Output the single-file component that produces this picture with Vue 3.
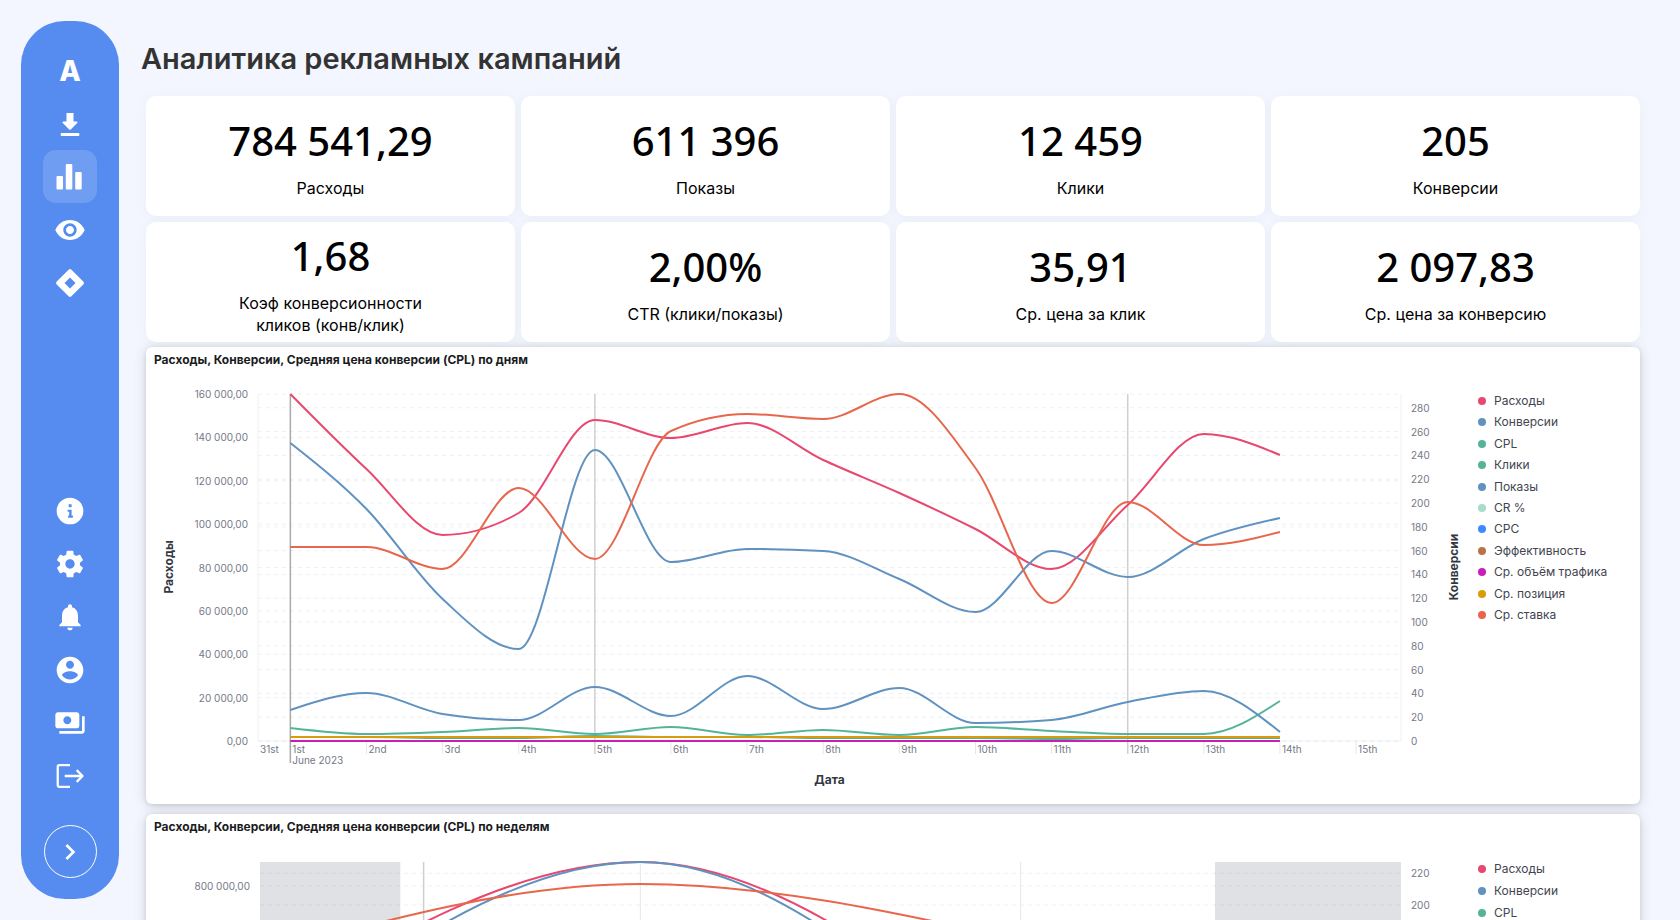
<script setup>
import { ref, computed, onMounted, onBeforeUnmount } from 'vue'

const kpis = [
  { value: '784 541,29', label: 'Расходы' },
  { value: '611 396', label: 'Показы' },
  { value: '12 459', label: 'Клики' },
  { value: '205', label: 'Конверсии' },
  { value: '1,68', label: 'Коэф конверсионности кликов (конв/клик)' },
  { value: '2,00%', label: 'CTR (клики/показы)' },
  { value: '35,91', label: 'Ср. цена за клик' },
  { value: '2 097,83', label: 'Ср. цена за конверсию' },
]

const red = '#e8486f'
const blue = '#6092c0'
const green = '#54b399'
const orange = '#e7664c'

const legend = [
  { name: 'Расходы', color: red },
  { name: 'Конверсии', color: blue },
  { name: 'CPL', color: green },
  { name: 'Клики', color: green },
  { name: 'Показы', color: blue },
  { name: 'CR %', color: '#a8dbc9' },
  { name: 'CPC', color: '#3c8cff' },
  { name: 'Эффективность', color: '#b9734a' },
  { name: 'Ср. объём трафика', color: '#ca1eb8' },
  { name: 'Ср. позиция', color: '#da9b0b' },
  { name: 'Ср. ставка', color: orange },
]

// Heights above the baseline, for a plot 347 units tall, one entry per day
const daily = [
  { color: red, h: [347, 272, 206, 228, 321, 303, 318, 281, 248, 212, 172, 236, 307, 286] },
  { color: blue, h: [298, 232, 142, 92, 291, 179, 192, 190, 162, 129, 190, 164, 202, 223] },
  { color: green, h: [13, 7, 9, 13, 7, 14, 6, 11, 6, 14, 10, 7, 7, 40] },
  { color: green, h: [4, 4, 3, 3, 5, 4, 4, 3, 3, 3, 2, 3, 3, 3] },
  { color: blue, h: [31, 48, 27, 21, 54, 25, 65, 32, 53, 18, 21, 39, 50, 9] },
  { color: '#ca1eb8', h: Array(14).fill(0) },
  { color: '#da9b0b', h: Array(14).fill(4) },
  { color: orange, h: [194, 194, 172, 253, 182, 310, 327, 322, 347, 273, 138, 239, 196, 209] },
]

// Plot 360 units tall, one entry per week
const weekly = [
  { color: red, h: [206, 360, 165] },
  { color: blue, h: [174, 360, 133] },
  { color: orange, h: [267, 338, 282] },
]

const body = ref(null)
const width = ref(1332)
let observer
onMounted(() => {
  const measure = () => { width.value = body.value.clientWidth }
  measure()
  observer = new ResizeObserver(measure)
  observer.observe(body.value)
})
onBeforeUnmount(() => observer && observer.disconnect())

// Monotone cubic interpolation in x
function curve(pts) {
  const n = pts.length
  const s = []
  for (let i = 0; i < n - 1; i++) s.push((pts[i + 1][1] - pts[i][1]) / (pts[i + 1][0] - pts[i][0]))
  const m = Array(n).fill(0)
  for (let i = 1; i < n - 1; i++) {
    const a = s[i - 1]
    const b = s[i]
    m[i] = (Math.sign(a) + Math.sign(b)) * Math.min(Math.abs(a), Math.abs(b), 0.25 * Math.abs(a + b))
  }
  m[0] = (3 * s[0] - m[1]) / 2
  m[n - 1] = (3 * s[n - 2] - m[n - 2]) / 2
  let d = `M${pts[0][0]} ${pts[0][1]}`
  for (let i = 0; i < n - 1; i++) {
    const [x0, y0] = pts[i]
    const [x1, y1] = pts[i + 1]
    const k = (x1 - x0) / 3
    d += `C${x0 + k} ${y0 + m[i] * k} ${x1 - k} ${y1 - m[i + 1] * k} ${x1} ${y1}`
  }
  return d
}

const money = (v) => String(v).replace(/\B(?=(\d{3})+$)/g, ' ') + ',00'

const day = computed(() => {
  const left = 112
  const right = width.value - 77
  const top = 23
  const bottom = 370
  const w = right - left
  const first = left + w * 0.0283
  const step = w * 0.0666
  const names = ['1st', '2nd', '3rd', '4th', '5th', '6th', '7th', '8th', '9th', '10th', '11th', '12th', '13th', '14th', '15th']
  return {
    left, right, top, bottom, first,
    mid: (left + right) / 2,
    yLeft: Array.from({ length: 9 }, (_, i) => ({ y: bottom - (347 / 8) * i, text: money(i * 20000) })),
    yRight: Array.from({ length: 15 }, (_, i) => ({ y: bottom - 23.8 * i, text: i * 20 })),
    ticks: names.map((text, i) => ({ text, x: first + step * i, week: i === 4 || i === 11 })),
    lines: daily.map((l) => ({ color: l.color, d: curve(l.h.map((h, i) => [first + step * i, bottom - h])) })),
  }
})

const week = computed(() => {
  const left = 114
  const right = width.value - 77
  const top = 24
  const bottom = 384
  const w = right - left
  const step = w / 3
  return {
    left, right, top, bottom,
    month: left + w * 0.1434,
    yLeft: Array.from({ length: 9 }, (_, i) => ({ y: bottom - 42 * i, text: money(i * 100000) })),
    yRight: Array.from({ length: 12 }, (_, i) => ({ y: bottom - 31.7 * i, text: i * 20 })),
    marks: [left + step, left + step * 2],
    bands: [
      { x: left, w: w * 0.123 },
      { x: left + w * 0.837, w: w * 0.163 },
    ],
    lines: weekly.map((l) => ({ color: l.color, d: curve(l.h.map((h, i) => [left + step * i, bottom - h])) })),
  }
})
</script>

<template>
  <div class="app">
    <nav class="sidebar" aria-label="Главное меню">
      <a class="item logo" href="#">A</a>
      <button class="item" type="button" aria-label="Загрузка">
        <svg viewBox="0 0 32 32"><path d="M12.5 5h7v8.5h3.1c.9 0 1.2.9.6 1.5l-6.4 6.4a1.1 1.1 0 0 1-1.6 0L8.800 15c-.6-.6-.3-1.500.6-1.500h3.100z" /><rect x="6.700" y="25" width="18.700" height="3" rx="1" /></svg>
      </button>
      <button class="item active" type="button" aria-label="Аналитика">
        <svg viewBox="0 0 32 32"><rect x="2.500" y="15" width="6.500" height="13.500" rx="1" /><rect x="11.800" y="3" width="6.500" height="25.500" rx="1" /><rect x="21.200" y="11" width="6.500" height="17.500" rx="1" /></svg>
      </button>
      <button class="item" type="button" aria-label="Просмотр">
        <svg viewBox="0 0 24 24"><path d="M12 4.500C7 4.500 2.730 7.610 1 12c1.730 4.390 6 7.500 11 7.500s9.270-3.110 11-7.500c-1.730-4.390-6-7.500-11-7.500zM12 17c-2.760 0-5-2.240-5-5s2.240-5 5-5 5 2.240 5 5-2.240 5-5 5zm0-8c-1.660 0-3 1.340-3 3s1.340 3 3 3 3-1.340 3-3-1.340-3-3-3z" /></svg>
      </button>
      <button class="item" type="button" aria-label="Объекты">
        <svg viewBox="0 0 32 32"><path fill-rule="evenodd" d="M14.600 2.700a2 2 0 0 1 2.800 0l11.900 11.900a2 2 0 0 1 0 2.800L17.400 29.300a2 2 0 0 1-2.800 0L2.700 17.400a2 2 0 0 1 0-2.800zM16 10.500 10.500 16l5.500 5.500 5.500-5.500z" /></svg>
      </button>

      <span class="spacer"></span>

      <button class="item" type="button" aria-label="Информация">
        <svg viewBox="0 0 24 24"><path fill-rule="evenodd" d="M12 2a10 10 0 1 0 0 20 10 10 0 0 0 0-20zM11 7h2.200v2.200H11zM10.200 11h3v4.400h1V17h-3.600v-1.600h.8v-2.800h-1.200z" /></svg>
      </button>
      <button class="item" type="button" aria-label="Настройки">
        <svg viewBox="0 0 24 24"><path d="M19.430 12.980c.04-.32.07-.64.07-.98s-.03-.66-.07-.98l2.110-1.650c.19-.15.24-.42.12-.64l-2-3.460c-.12-.22-.39-.3-.61-.22l-2.490 1c-.52-.4-1.080-.73-1.690-.98l-.38-2.650C14.460 2.180 14.250 2 14 2h-4c-.25 0-.46.18-.49.42l-.38 2.650c-.61.25-1.170.59-1.690.98l-2.490-1c-.23-.09-.49 0-.61.22l-2 3.460c-.13.22-.07.49.12.64l2.110 1.650c-.04.32-.07.65-.07.98s.03.66.07.98l-2.110 1.650c-.19.15-.24.42-.12.64l2 3.460c.12.22.39.3.61.22l2.490-1c.52.4 1.080.73 1.690.98l.38 2.650c.03.24.24.42.49.42h4c.25 0 .46-.18.49-.42l.38-2.650c.61-.25 1.170-.59 1.690-.98l2.490 1c.23.09.49 0 .61-.22l2-3.460c.12-.22.07-.49-.12-.64l-2.110-1.650zM12 15.500c-1.930 0-3.500-1.570-3.500-3.500s1.570-3.500 3.500-3.500 3.500 1.570 3.500 3.500-1.570 3.500-3.500 3.500z" /></svg>
      </button>
      <button class="item" type="button" aria-label="Уведомления">
        <svg viewBox="0 0 24 24"><path d="M12 22c1.100 0 2-.9 2-2h-4c0 1.100.89 2 2 2zm6-6v-5c0-3.070-1.640-5.640-4.500-6.320V4c0-.83-.67-1.500-1.500-1.500s-1.500.67-1.500 1.500v.68C7.630 5.360 6 7.920 6 11v5l-2 2v1h16v-1l-2-2z" /></svg>
      </button>
      <button class="item" type="button" aria-label="Профиль">
        <svg viewBox="0 0 24 24"><path d="M12 2C6.480 2 2 6.480 2 12s4.480 10 10 10 10-4.480 10-10S17.520 2 12 2zm0 3c1.660 0 3 1.340 3 3s-1.340 3-3 3-3-1.340-3-3 1.340-3 3-3zm0 14.200c-2.500 0-4.710-1.280-6-3.220.03-1.990 4-3.080 6-3.080 1.990 0 5.970 1.090 6 3.080-1.290 1.940-3.500 3.220-6 3.220z" /></svg>
      </button>
      <button class="item" type="button" aria-label="Платежи">
        <svg viewBox="0 0 24 24"><path d="M19 14V6c0-1.100-.9-2-2-2H3c-1.100 0-2 .9-2 2v8c0 1.100.9 2 2 2h14c1.100 0 2-.9 2-2zm-9-1c-1.660 0-3-1.340-3-3s1.340-3 3-3 3 1.340 3 3-1.340 3-3 3zm13-6v11c0 1.100-.9 2-2 2H4v-2h17V7h2z" /></svg>
      </button>
      <button class="item" type="button" aria-label="Выход">
        <svg class="stroked" viewBox="0 0 24 24"><path d="M12 3.800H4a1.200 1.200 0 0 0-1.200 1.200v14A1.200 1.200 0 0 0 4 20.200h8M8 12h13M17 7.600l4.400 4.400-4.400 4.400" /></svg>
      </button>
      <button class="item expand" type="button" aria-label="Развернуть">
        <svg viewBox="0 0 24 24"><path d="M10 6 8.590 7.410 13.170 12l-4.580 4.590L10 18l6-6z" /></svg>
      </button>
    </nav>

    <main class="main">
      <h1>Аналитика рекламных кампаний</h1>
      <div class="content">
        <section class="kpis">
          <article v-for="k in kpis" :key="k.label" class="kpi">
            <strong>{{ k.value }}</strong>
            <span>{{ k.label }}</span>
          </article>
        </section>

        <section class="panel">
          <h2>Расходы, Конверсии, Средняя цена конверсии (CPL) по дням</h2>
          <div class="chart">
            <div ref="body" class="plot">
              <svg :width="width" height="433">
                <g class="grid">
                  <path v-for="t in day.yLeft" :key="t.text" :d="`M${day.left} ${t.y}H${day.right}`" />
                  <path v-for="t in day.yRight" :key="t.text" :d="`M${day.left} ${t.y}H${day.right}`" />
                </g>
                <path class="frame" :d="`M${day.left} ${day.top}V${day.bottom}H${day.right}V${day.top}`" />
                <template v-for="t in day.ticks" :key="t.text">
                  <path :class="t.week ? 'week' : 'tick'" :d="`M${t.x} ${t.week ? day.top : day.bottom}V383`" />
                  <text class="label" :x="t.x + 2" y="382">{{ t.text }}</text>
                </template>
                <path class="month" :d="`M${day.first} ${day.top}V392`" />
                <text class="label" :x="day.left + 2" y="382">31st</text>
                <text class="label" :x="day.first + 2" y="393">June 2023</text>
                <path v-for="(l, i) in day.lines" :key="i" class="line" :stroke="l.color" :d="l.d" />
                <text v-for="t in day.yLeft" :key="t.text" class="label end" :x="day.left - 10" :y="t.y + 4">{{ t.text }}</text>
                <text v-for="t in day.yRight" :key="t.text" class="label" :x="day.right + 10" :y="t.y + 4">{{ t.text }}</text>
                <text class="axis" transform="translate(27 196) rotate(-90)">Расходы</text>
                <text class="axis" :transform="`translate(${day.right + 57} 196) rotate(-90)`">Конверсии</text>
                <text class="axis" :x="day.mid" y="413">Дата</text>
              </svg>
            </div>
            <ul class="legend">
              <li v-for="l in legend" :key="l.name"><i :style="{ background: l.color }"></i>{{ l.name }}</li>
            </ul>
          </div>
        </section>

        <section class="panel">
          <h2>Расходы, Конверсии, Средняя цена конверсии (CPL) по неделям</h2>
          <div class="chart">
            <div class="plot">
              <svg :width="width" height="433">
                <rect v-for="b in week.bands" :key="b.x" class="band" :x="b.x" :y="week.top" :width="b.w" height="360" />
                <g class="grid shaded">
                  <path v-for="t in week.yLeft" :key="t.text" :d="`M${week.left} ${t.y}H${week.right}`" />
                  <path v-for="t in week.yRight" :key="t.text" :d="`M${week.left} ${t.y}H${week.right}`" />
                </g>
                <path class="week" :d="`M${week.month} ${week.top}V${week.bottom}`" />
                <path v-for="x in week.marks" :key="x" class="tick" :d="`M${x} ${week.top}V${week.bottom}`" />
                <path v-for="(l, i) in week.lines" :key="i" class="line" :stroke="l.color" :d="l.d" />
                <text v-for="t in week.yLeft" :key="t.text" class="label end" :x="week.left - 10" :y="t.y + 4">{{ t.text }}</text>
                <text v-for="t in week.yRight" :key="t.text" class="label" :x="week.right + 10" :y="t.y + 4">{{ t.text }}</text>
              </svg>
            </div>
            <ul class="legend roomy">
              <li v-for="l in legend" :key="l.name"><i :style="{ background: l.color }"></i>{{ l.name }}</li>
            </ul>
          </div>
        </section>
      </div>
    </main>
  </div>
</template>

<style>
body {
  background: #f3f6fe;
}
</style>

<style scoped>
.app {
  display: flex;
  height: 100vh;
  overflow: hidden;
  box-sizing: border-box;
  padding-left: 21px;
  font-family: Inter, "Noto Sans", sans-serif;
  background: #f3f6fe;
}
.sidebar {
  flex: none;
  display: flex;
  flex-direction: column;
  align-items: center;
  width: 98px;
  margin: 21px 0;
  padding: 23px 0 21px;
  box-sizing: border-box;
  border-radius: 44px;
  background: #568cef;
}
.item {
  flex: none;
  display: flex;
  align-items: center;
  justify-content: center;
  width: 54px;
  height: 53px;
  padding: 0;
  border: 0;
  border-radius: 13px;
  background: none;
  color: #fff;
  cursor: pointer;
}
.item svg {
  width: 32px;
  height: 32px;
  fill: currentColor;
}
.item svg.stroked {
  fill: none;
  stroke: currentColor;
  stroke-width: 1.7;
  stroke-linejoin: round;
}
.logo {
  font-size: 28px;
  font-weight: 800;
  text-decoration: none;
}
.active {
  background: rgba(255, 255, 255, 0.15);
}
.spacer {
  flex: 1;
}
.expand {
  width: 53px;
  margin-top: 23px;
  border: 1px solid #fff;
  border-radius: 50%;
}
.main {
  flex: 1;
  min-width: 0;
  overflow-y: auto;
  scrollbar-width: none;
  padding: 39px 40px 40px 22px;
}
h1 {
  margin: 0 0 17px;
  font-size: 29px;
  line-height: 40px;
  font-weight: 600;
  color: #333;
}
.content {
  padding-left: 5px;
}
.kpis {
  position: relative;
  z-index: 1;
  display: grid;
  grid-template-columns: repeat(4, 1fr);
  gap: 6px;
  margin-bottom: 5px;
}
.kpi {
  display: flex;
  flex-direction: column;
  align-items: center;
  justify-content: center;
  gap: 8px;
  height: 120px;
  border-radius: 10px;
  background: #fff;
  box-shadow: 0 2px 12px rgba(50, 90, 140, 0.05);
  color: #000;
}
.kpi strong {
  font-family: "Noto Sans", sans-serif;
  font-size: 40px;
  line-height: 56px;
  font-weight: 500;
}
.kpi span {
  max-width: 220px;
  font-size: 16px;
  line-height: 22px;
  text-align: center;
}
.panel {
  margin-bottom: 10px;
  border-radius: 6px;
  background: #fff;
  box-shadow: 0 1px 4px rgba(0, 0, 0, 0.1), 0 2px 14px rgba(0, 0, 0, 0.14);
}
h2 {
  margin: 0;
  padding: 2px 0 0 8px;
  font-size: 12px;
  line-height: 22px;
  font-weight: 700;
  color: #1a1c21;
}
.chart {
  display: flex;
}
.plot {
  flex: 1;
  min-width: 0;
}
.plot svg {
  display: block;
}
.grid path {
  stroke: #eef0f3;
  stroke-dasharray: 4 4;
}
.shaded path {
  stroke: rgba(90, 100, 120, 0.1);
}
.frame {
  fill: none;
  stroke: #f0f1f4;
}
.band {
  fill: #e0e1e5;
}
.tick {
  stroke: #e6e7ea;
  stroke-width: 1;
}
.week {
  stroke: #cfcfcf;
  stroke-width: 1.5;
}
.month {
  stroke: #a9a9a9;
  stroke-width: 1.5;
}
.line {
  fill: none;
  stroke-width: 2;
}
.label {
  font-size: 10px;
  fill: #747986;
}
.end {
  text-anchor: end;
}
.axis {
  font-size: 12px;
  font-weight: 700;
  fill: #343741;
  text-anchor: middle;
}
.legend {
  flex: none;
  display: flex;
  flex-direction: column;
  justify-content: space-between;
  width: 162px;
  height: 228px;
  box-sizing: border-box;
  margin: 23px 0 0;
  padding: 0;
  list-style: none;
  font-size: 12px;
  line-height: 14px;
  color: #42454f;
}
.roomy {
  margin-top: 24px;
  height: 234px;
}
.legend li {
  display: flex;
  align-items: center;
  gap: 8px;
}
.legend i {
  width: 8px;
  height: 8px;
  border-radius: 50%;
}
</style>
